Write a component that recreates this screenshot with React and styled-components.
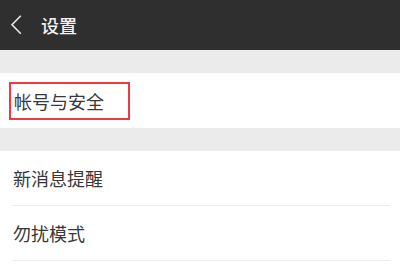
import styled, { createGlobalStyle } from "styled-components";

const GlobalStyle = createGlobalStyle`
  html, body {
    margin: 0;
    padding: 0;
    background: #ebebeb;
  }
  body {
    font-family: "Noto Sans CJK SC", "Noto Sans", sans-serif;
  }
`;

const Page = styled.div`
  width: 400px;
  height: 266px;
  overflow: hidden;
  background: #ebebeb;
`;

const TopBar = styled.div`
  height: 50px;
  background: #2f2f2f;
  display: flex;
  align-items: center;
  padding-left: 10px;
  box-sizing: border-box;
`;

const BackIcon = styled.svg`
  width: 12px;
  height: 20px;
  flex-shrink: 0;
`;

const Title = styled.div`
  margin-left: 19px;
  color: #f2f2f2;
  font-size: 18px;
  font-weight: 500;
  line-height: 1;
  margin-top: -1px;
`;

const Section = styled.div`
  margin-top: ${(p) => p.$gap}px;
  background: #fff;
  padding-right: 10px;
`;

const Row = styled.div`
  height: ${(p) => p.$h}px;
  margin-left: 12px;
  display: flex;
  align-items: center;
  border-bottom: ${(p) => (p.$line ? "1px solid #ececec" : "none")};
  box-sizing: border-box;
`;

const Label = styled.span`
  color: #383838;
  font-size: 18px;
  line-height: 1;
  padding-left: 1px;
`;

const Marked = styled.div`
  margin-left: -3px;
  width: 121px;
  height: 38px;
  border: 2px solid #ec3b44;
  box-sizing: border-box;
  display: flex;
  align-items: center;
  padding-left: 2px;
  margin-top: 1px;
`;

const Tail = styled.div`
  height: 20px;
  background: #fff;
`;

export default function App() {
  return (
    <Page>
      <GlobalStyle />
      <TopBar>
        <BackIcon viewBox="0 0 12 20">
          <path d="M10.8 0.8 L2 9.8 L10.8 18.8" fill="none" stroke="#e6e6e6" strokeWidth="1.6" />
        </BackIcon>
        <Title>设置</Title>
      </TopBar>
      <Section $gap={23}>
        <Row $h={55}>
          <Marked>
            <Label>帐号与安全</Label>
          </Marked>
        </Row>
      </Section>
      <Section $gap={23}>
        <Row $h={55} $line>
          <Label>新消息提醒</Label>
        </Row>
        <Row $h={55} $line>
          <Label>勿扰模式</Label>
        </Row>
      </Section>
      <Tail />
    </Page>
  );
}
